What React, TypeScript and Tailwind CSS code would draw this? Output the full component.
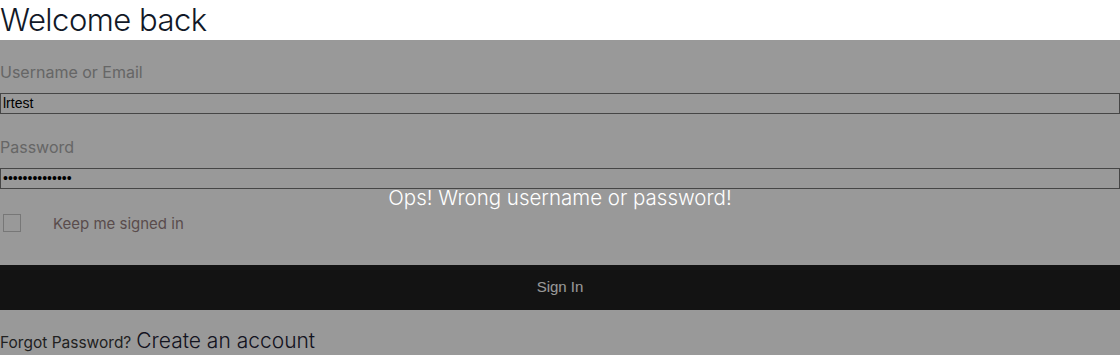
import React, { useState } from "react";

export default function App() {
  const [username, setUsername] = useState("lrtest");
  const [password, setPassword] = useState("aaaaaaaaaaaaaa");
  const [remember, setRemember] = useState(false);

  return (
    <div className="min-h-screen bg-white font-['Inter',sans-serif]">
      <h1 className="text-[31px] leading-[40px] font-light tracking-[-0.5px] text-[#111827]">
        Welcome back
      </h1>

      <div className="relative">
        <form className="flex flex-col pt-[20px]" onSubmit={(e) => e.preventDefault()}>
          <label className="text-[16px] leading-[24px] text-[#aaaaaa]">
            Username or Email
          </label>
          <input
            type="text"
            value={username}
            onChange={(e) => setUsername(e.target.value)}
            className="mt-[9px] h-[21px] w-full border border-[#767676] px-[2px] font-['Liberation_Sans',sans-serif] text-[14px] text-black"
          />

          <label className="mt-[21px] text-[16px] leading-[24px] text-[#aaaaaa]">
            Password
          </label>
          <input
            type="password"
            value={password}
            onChange={(e) => setPassword(e.target.value)}
            className="mt-[9px] h-[21px] w-full border border-[#767676] px-[2px] font-['Liberation_Sans',sans-serif] text-[14px] text-black"
          />

          <div className="mt-[25px] flex h-[18px] items-center">
            <input
              type="checkbox"
              checked={remember}
              onChange={(e) => setRemember(e.target.checked)}
              className="ml-[3px] h-[18px] w-[18px] appearance-none border border-[#c6c6c6] bg-transparent"
            />
            <span className="ml-[32px] pt-[2px] text-[15px] text-[#967f7f]">Keep me signed in</span>
          </div>

          <button
            type="submit"
            className="mt-[33px] h-[45px] w-full bg-[#212121] font-['Liberation_Sans',sans-serif] text-[15px] text-white"
          >
            Sign In
          </button>

          <div className="mt-[15px] flex items-baseline gap-[5px] whitespace-nowrap">
            <a href="#" className="text-[15.5px] text-[#383838]">
              Forgot Password?
            </a>
            <a href="#" className="text-[21px] font-light text-[#1e2235]">
              Create an account
            </a>
          </div>
        </form>

        <div className="absolute inset-0 flex items-center justify-center bg-black/40">
          <p className="text-[20.5px] font-light text-white">Ops! Wrong username or password!</p>
        </div>
      </div>
    </div>
  );
}
